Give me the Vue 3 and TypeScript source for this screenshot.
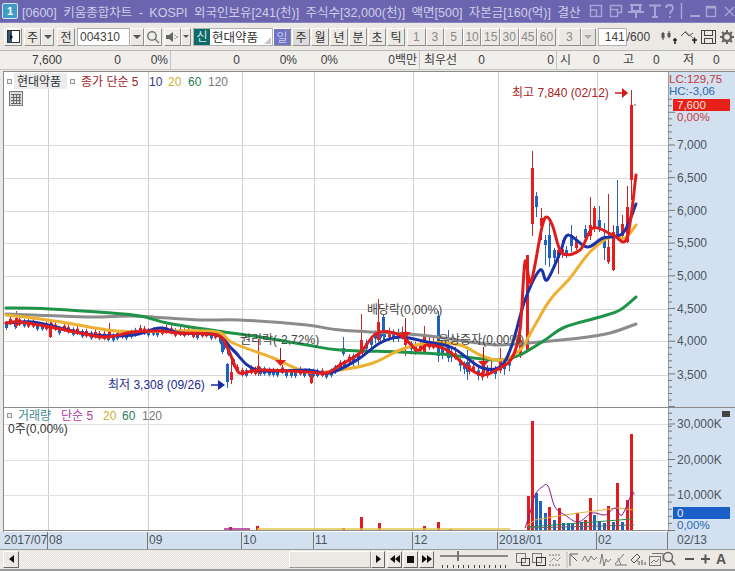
<script setup lang="ts">
type Point = [number, number];
type Candle = { x: number; wt: number; wb: number; bt: number; bb: number; up: boolean };

const toPoints = (line: Point[]) => line.map((p) => p.join(',')).join(' ');

// catmull-rom through the points, the moving averages are curves in the original
const smooth = (line: Point[]) => {
  let d = `M${line[0][0]} ${line[0][1]}`;
  for (let i = 0; i < line.length - 1; i++) {
    const p0 = line[Math.max(i - 1, 0)];
    const p1 = line[i];
    const p2 = line[i + 1];
    const p3 = line[Math.min(i + 2, line.length - 1)];
    const c1x = p1[0] + (p2[0] - p0[0]) / 6;
    const c1y = p1[1] + (p2[1] - p0[1]) / 6;
    const c2x = p2[0] - (p3[0] - p1[0]) / 6;
    const c2y = p2[1] - (p3[1] - p1[1]) / 6;
    d += `C${c1x.toFixed(1)} ${c1y.toFixed(1)} ${c2x.toFixed(1)} ${c2y.toFixed(1)} ${p2[0]} ${p2[1]}`;
  }
  return d;
};

const redLine: Point[] = [[6,323],[20,322],[50,327],[80,333],[107,337],[133,332],[160,331],[180,333],[217,335],[227,347],[237,370],[243,373],[260,370],[307,372],[327,373],[340,365],[360,353],[377,333],[400,335],[417,350],[427,345],[447,350],[467,367],[483,375],[500,368],[512,358],[520,330],[525,262],[531,282],[542,227],[547,217],[553,227],[562,253],[580,250],[593,228],[613,235],[627,238],[636,175]];
const blueLine: Point[] = [[6,323],[33,322],[60,328],[93,335],[133,335],[160,328],[180,333],[217,335],[233,350],[257,370],[307,370],[330,373],[357,360],[380,343],[400,337],[427,342],[453,348],[480,367],[500,367],[512,345],[525,300],[540,270],[547,280],[560,253],[568,235],[587,247],[603,238],[623,233],[636,204]];
const yellowLine: Point[] = [[6,315],[33,318],[67,323],[107,330],[133,332],[167,331],[217,332],[233,343],[273,358],[307,372],[340,370],[373,363],[400,350],[427,343],[460,345],[480,355],[500,360],[520,350],[535,325],[550,300],[570,278],[590,252],[610,237],[625,238],[636,225]];
const greenLine: Point[] = [[6,308],[50,309],[133,315],[167,323],[217,331],[260,337],[307,345],[340,350],[400,352],[440,354],[473,358],[500,360],[520,355],[545,340],[565,327],[600,317],[620,310],[636,297]];
const grayLine: Point[] = [[6,314],[33,315],[87,317],[130,316],[153,317],[200,320],[240,320],[307,325],[340,330],[420,335],[470,342],[500,345],[540,342],[580,338],[610,333],[636,324]];

const maLines = [
  { d: smooth(grayLine), color: '#8c8c8c' },
  { d: smooth(greenLine), color: '#1e9448' },
  { d: smooth(yellowLine), color: '#eeb030' },
  { d: smooth(blueLine), color: '#1a32a8' },
  { d: smooth(redLine), color: '#e01c1c' },
];

const lineY = (x: number) => {
  for (let i = 1; i < redLine.length; i++) {
    const [x0, y0] = redLine[i - 1];
    const [x1, y1] = redLine[i];
    if (x <= x1) return y0 + ((y1 - y0) * (x - x0)) / (x1 - x0);
  }
  return 300;
};

// small candles hugging the 5 day line, left part of the chart
const candles: Candle[] = [];
for (let x = 6, i = 0; x < 512; x += 4.45, i++) {
  const y = lineY(x);
  const a = Math.sin(i * 12.9898) * 43758.5453;
  const r = a - Math.floor(a);
  const span = x > 350 ? 9 : 5;
  candles.push({
    x: Math.round(x),
    wt: y - 2 - r * span,
    wb: y + 2 + (1 - r) * span,
    bt: y - 1 - r * 3,
    bb: y + 1 + (1 - r) * 4,
    up: r > 0.45,
  });
}
const tall: Candle[] = [
  { x: 16, wt: 311, wb: 328, bt: 318, bb: 326, up: true },
  { x: 50, wt: 322, wb: 338, bt: 325, bb: 337, up: true },
  { x: 109, wt: 323, wb: 340, bt: 331, bb: 338, up: true },
  { x: 222, wt: 340, wb: 354, bt: 342, bb: 352, up: false },
  { x: 227, wt: 363, wb: 388, bt: 364, bb: 382, up: false },
  { x: 231, wt: 360, wb: 384, bt: 372, bb: 380, up: true },
  { x: 258, wt: 339, wb: 376, bt: 366, bb: 373, up: true },
  { x: 311, wt: 370, wb: 384, bt: 375, bb: 383, up: true },
  { x: 343, wt: 337, wb: 356, bt: 348, bb: 354, up: false },
  { x: 361, wt: 314, wb: 351, bt: 340, bb: 350, up: true },
  { x: 378, wt: 299, wb: 342, bt: 322, bb: 340, up: true },
  { x: 383, wt: 315, wb: 340, bt: 317, bb: 336, up: false },
  { x: 405, wt: 318, wb: 356, bt: 335, bb: 345, up: true },
  { x: 424, wt: 326, wb: 354, bt: 336, bb: 352, up: true },
  { x: 438, wt: 311, wb: 362, bt: 316, bb: 356, up: false },
  { x: 448, wt: 330, wb: 362, bt: 345, bb: 358, up: false },
  { x: 467, wt: 350, wb: 380, bt: 362, bb: 372, up: false },
  { x: 483, wt: 347, wb: 375, bt: 362, bb: 373, up: true },
  { x: 500, wt: 348, wb: 372, bt: 358, bb: 366, up: true },
  { x: 520, wt: 330, wb: 358, bt: 340, bb: 356, up: true },
  { x: 527, wt: 255, wb: 350, bt: 255, bb: 350, up: true },
  { x: 532, wt: 151, wb: 236, bt: 168, bb: 224, up: true },
  { x: 536, wt: 192, wb: 217, bt: 196, bb: 207, up: false },
  { x: 541, wt: 208, wb: 240, bt: 218, bb: 226, up: true },
  { x: 545, wt: 235, wb: 265, bt: 240, bb: 245, up: false },
  { x: 549, wt: 223, wb: 267, bt: 235, bb: 258, up: false },
  { x: 554, wt: 248, wb: 265, bt: 250, bb: 258, up: false },
  { x: 558, wt: 245, wb: 274, bt: 250, bb: 258, up: true },
  { x: 562, wt: 240, wb: 258, bt: 249, bb: 254, up: true },
  { x: 566, wt: 246, wb: 258, bt: 250, bb: 254, up: false },
  { x: 571, wt: 225, wb: 252, bt: 235, bb: 246, up: false },
  { x: 576, wt: 236, wb: 250, bt: 240, bb: 248, up: true },
  { x: 585, wt: 225, wb: 240, bt: 229, bb: 238, up: false },
  { x: 590, wt: 197, wb: 240, bt: 225, bb: 236, up: true },
  { x: 594, wt: 206, wb: 232, bt: 208, bb: 228, up: true },
  { x: 599, wt: 206, wb: 232, bt: 220, bb: 228, up: false },
  { x: 604, wt: 223, wb: 260, bt: 237, bb: 248, up: false },
  { x: 608, wt: 194, wb: 264, bt: 247, bb: 262, up: true },
  { x: 613, wt: 225, wb: 271, bt: 232, bb: 270, up: true },
  { x: 617, wt: 180, wb: 240, bt: 226, bb: 238, up: false },
  { x: 622, wt: 215, wb: 240, bt: 224, bb: 236, up: true },
  { x: 627, wt: 186, wb: 243, bt: 207, bb: 242, up: true },
  { x: 631, wt: 90, wb: 200, bt: 105, bb: 180, up: true },
];
const allCandles = [...candles, ...tall];

const gridX = [48, 148, 242, 314, 413, 498, 597];
const priceGridY = [145, 178, 211, 243, 276, 309, 341, 375];
const volGridY = [424, 460, 495];

const priceLabels = [
  { t: '7,000', y: 149 }, { t: '6,500', y: 182 }, { t: '6,000', y: 215 }, { t: '5,500', y: 247 },
  { t: '5,000', y: 280 }, { t: '4,500', y: 313 }, { t: '4,000', y: 345 }, { t: '3,500', y: 379 },
];
const volLabels = [
  { t: '30,000K', y: 428 }, { t: '20,000K', y: 464 }, { t: '10,000K', y: 499 },
];

const priceTicks: { y: number; major: boolean }[] = [];
for (let i = -7; i < 44; i++) priceTicks.push({ y: 145 + i * 6.54, major: i % 5 === 0 });
const volTicks: { y: number; major: boolean }[] = [];
for (let i = 0; i < 16; i++) volTicks.push({ y: 424 + i * 7.1, major: i % 5 === 0 });

const volBars = [
  [528,496,1],[532,421,1],[536,493,0],[540,501,0],[545,513,0],[549,507,1],[554,520,0],[559,508,1],
  [563,523,0],[568,523,0],[572,524,0],[577,513,1],[581,522,0],[585,520,1],[590,498,1],[594,515,0],
  [599,521,0],[604,523,0],[608,506,1],[613,522,0],[617,483,1],[622,522,0],[627,500,1],[631,434,1],
  [379,523,1],[424,526,1],[438,522,1],[361,517,1],[257,526,1],[230,527,1],[343,528,1],[450,529,1],
];
const vol5: Point[] = [[525,528],[530,513],[535,495],[542,487],[548,486],[555,507],[565,515],[578,522],[592,513],[605,515],[615,508],[622,515],[632,493],[634,495]];
const vol20: Point[] = [[525,527],[535,520],[552,517],[578,513],[618,508],[634,510]];
const vol60: Point[] = [[528,527],[580,523],[632,519]];
const vol120: Point[] = [[528,528],[634,525]];

const minuteBtns = ['1', '3', '5', '10', '15', '30', '45', '60'];
const periodBtns = ['주', '월', '년', '분', '초', '틱'];

// date axis cells, width comes from the grid positions
const dateCells = [
  { t: '2017/07', w: 45 }, { t: '08', w: 100 }, { t: '09', w: 94 }, { t: '10', w: 72 },
  { t: '11', w: 99 }, { t: '12', w: 85 }, { t: '2018/01', w: 99 }, { t: '02', w: 71 },
];
const sliderDots = Array.from({ length: 13 }, (_, i) => i);
</script>

<template>
  <div class="window">
    <div class="titlebar">
      <span class="win-badge">1</span>
      <span class="title-text">[0600] 키움종합차트 - KOSPI 외국인보유[241(천)] 주식수[32,000(천)] 액면[500] 자본금[160(억)] 결산</span>
      <svg class="title-icons" width="146" height="18" viewBox="0 0 146 18" fill="none" stroke="#a9a5d6" stroke-width="1.4">
        <rect x="1.500" y="3.500" width="11" height="11" /><path d="M1.500 8h6v6.500" />
        <rect x="21.500" y="7.500" width="7" height="7" /><path d="M21.500 7V3.500h11v7h-4" />
        <path d="M41 3h12M43 3v6h8V3M39 10h16M47 10v6" stroke-width="2" />
        <path d="M60 3.500h12M66 3.500v11M63 15h6" stroke-width="2" />
        <path d="M77 6c0-4 7-4 7 0 0 3-3 3-3 6M81 14v2" stroke-width="1.800" />
        <path d="M92.500 1v16" />
        <path d="M101 14h10" stroke-width="2" />
        <rect x="117.500" y="4.500" width="9" height="10" /><path d="M117 5.500h10" stroke-width="2" />
        <path d="M136 5l9 9M145 5l-9 9" />
      </svg>
    </div>

    <div class="toolbar">
      <button class="btn icon-btn w18">
        <svg width="13" height="13" viewBox="0 0 13 13"><rect x=".5" y=".5" width="12" height="12" fill="#fff" stroke="#333" /><rect x="1" y="1" width="4" height="11" fill="#357" /><path d="M3 4l3 3-3 3z" fill="#111" /></svg>
      </button>
      <button class="btn w17 ml2">주</button>
      <button class="btn arrow w13"><i class="caret"></i></button>
      <button class="btn w18 ml3">전</button>
      <div class="field code ml2">004310</div>
      <button class="btn arrow w14"><i class="caret"></i></button>
      <button class="btn icon-btn w18">
        <svg width="14" height="14" viewBox="0 0 14 14" fill="none" stroke="#777" stroke-width="1.500"><circle cx="6" cy="6" r="4.200" /><path d="M9 9l4 4" /></svg>
      </button>
      <button class="btn icon-btn w17 ml2">
        <svg width="13" height="12" viewBox="0 0 13 12"><path d="M0 4h3l4-3v10L3 8H0z" fill="#666" /><path d="M9 4v1M9 7v1M11 5v2" stroke="#777" /></svg>
      </button>
      <button class="btn arrow w10"><i class="caret small"></i></button>
      <div class="stock ml2">
        <span class="new-tag">신</span>
        <span class="stock-name">현대약품</span>
        <i class="resize-grip"></i>
      </div>
      <button class="btn period active">일</button>
      <button v-for="p in periodBtns" :key="p" class="btn period" :class="{ soft: p === '주' }">{{ p }}</button>
      <div class="minutes">
        <button v-for="m in minuteBtns" :key="m" class="btn minute">{{ m }}</button>
      </div>
      <button class="btn count">3</button>
      <button class="btn arrow w15 disabled"><i class="caret grey"></i></button>
      <div class="field bars">141</div>
      <span class="bars-max">/600</span>
      <div class="tool-icons">
        <svg width="18" height="18" viewBox="0 0 18 18"><path d="M3 4v8M9 3v7" stroke="#444" stroke-width="1" /><rect x="1.500" y="5" width="3" height="5" fill="#555" /><rect x="7.500" y="5" width="3" height="4" fill="#555" /><path d="M13 12h4M15 10v6" stroke="#222" stroke-width="1.600" /></svg>
        <svg width="18" height="18" viewBox="0 0 18 18" fill="none"><path d="M1 8l4-4 4 4 4-3" stroke="#555" /><path d="M5 3l8 7" stroke="#888" /><path d="M12 12h5M14.500 9.500v6" stroke="#222" stroke-width="1.600" /></svg>
        <svg width="17" height="18" viewBox="0 0 17 18" fill="none" stroke="#444"><rect x="1.500" y="2.500" width="14" height="13" /><rect x="4.500" y="2.500" width="8" height="5" /><rect x="4.500" y="10.500" width="8" height="5" /></svg>
        <svg width="16" height="18" viewBox="0 0 16 18"><circle cx="8" cy="9" r="4" fill="none" stroke="#666" stroke-width="2.500" /><path d="M8 2v3M8 13v3M1 9h3M12 9h3M3 4l2 2M11 12l2 2M13 4l-2 2M5 12l-2 2" stroke="#666" stroke-width="2" /></svg>
      </div>
    </div>

    <div class="inforow">
      <span class="c r" style="width: 62px">7,600</span>
      <span class="c r" style="width: 59px">0</span>
      <span class="c r sep" style="width: 50px">0%</span>
      <span class="c r" style="width: 69px">0</span>
      <span class="c r" style="width: 57px">0%</span>
      <span class="c r" style="width: 41px">0%</span>
      <span class="c r sep" style="width: 82px">0백만</span>
      <span class="c" style="width: 37px; padding-left: 4px">최우선</span>
      <span class="c r" style="width: 28px">0</span>
      <span class="c r sep" style="width: 72px">0</span>
      <span class="c" style="width: 36px; padding-left: 3px">시</span>
      <span class="c" style="width: 30px">0</span>
      <span class="c" style="width: 30px">고</span>
      <span class="c" style="width: 30px">0</span>
      <span class="c" style="width: 30px">저</span>
      <span class="c">0</span>
    </div>

    <svg class="panes" width="735" height="462" viewBox="0 70 735 462">
      <rect x="3" y="72" width="665" height="460" fill="#fff" />
      <rect x="668" y="72" width="67" height="460" fill="#d3e0ef" />

      <line v-for="x in gridX" :key="'gx' + x" :x1="x + 0.5" :x2="x + 0.5" y1="72" y2="531" stroke="#cfcfcf" />
      <line v-for="y in priceGridY" :key="'gy' + y" x1="3" x2="668" :y1="y + 0.5" :y2="y + 0.5" stroke="#d9d9d9" />
      <line v-for="y in volGridY" :key="'vy' + y" x1="3" x2="668" :y1="y + 0.5" :y2="y + 0.5" stroke="#e0e0e0" />

      <path d="M3.500 71v461M3 71.500h732M3 407.500h732M3 530.500h665" stroke="#8a8a8a" fill="none" />
      <path d="M668.500 71v461" stroke="#9a9a9a" />

      <g v-for="(c, i) in allCandles" :key="i">
        <line :x1="c.x + 0.5" :x2="c.x + 0.5" :y1="c.wt" :y2="c.wb" :stroke="c.up ? '#c22a2a' : '#2a62b8'" />
        <rect :x="c.x - 1" :y="c.bt" width="3" :height="c.bb - c.bt" :fill="c.up ? '#e41e1e' : '#1e62c0'" />
      </g>

      <path v-for="l in maLines" :key="l.color" :d="l.d" fill="none" :stroke="l.color" stroke-width="3" stroke-linejoin="round" stroke-linecap="round" />

      <path d="M280.500 348v12M405.500 318v14M483.500 347v14" stroke="#a01818" />
      <path d="M275 360h11l-5.500 6zM400 332h11l-5.500 6zM478 361h11l-5.500 6z" fill="#e01c1c" />
      <path d="M634 105h2" stroke="#c22a2a" />

      <!-- chart notes -->
      <text x="367" y="314" class="note">배당락(0,00%)</text>
      <text x="240" y="344" class="note">권리락(-2,72%)</text>
      <text x="438" y="344" class="note">유상증자(0,00%)</text>
      <text x="512" y="97" class="note high">최고 7,840 (02/12)</text>
      <path d="M615 93h8" stroke="#d01818" stroke-width="1.500" />
      <path d="M622 88l6 5-6 5z" fill="#d01818" />
      <text x="108" y="389" class="note low">최저 3,308 (09/26)</text>
      <path d="M211 385h8" stroke="#1a2aa0" stroke-width="1.500" />
      <path d="M218 380l7 5-7 5z" fill="#1a2aa0" />

      <!-- legends -->
      <rect x="7.500" y="79.500" width="4" height="4" fill="#eee" stroke="#999" />
      <rect x="14" y="73" width="53" height="16" fill="#ececec" />
      <text x="17" y="86" class="leg" fill="#333">현대약품</text>
      <rect x="70.500" y="79.500" width="4" height="4" fill="#eee" stroke="#999" />
      <text x="81" y="86" class="leg" fill="#a02424">종가 단순 5</text>
      <text x="149" y="86" class="leg" fill="#2a3a80">10</text>
      <text x="168" y="86" class="leg" fill="#c8b030">20</text>
      <text x="188" y="86" class="leg" fill="#2a7a4a">60</text>
      <text x="208" y="86" class="leg" fill="#777">120</text>
      <rect x="9.500" y="91.500" width="13" height="14" fill="#ddd" stroke="#777" />
      <path d="M11 94.500h10M11 97.500h10M11 100.500h10M11 103.500h10M13.500 94v10M16.500 94v10M19.500 94v10" stroke="#666" />

      <rect x="7.500" y="413.500" width="4" height="4" fill="#eee" stroke="#999" />
      <text x="18" y="420" class="leg" fill="#3a8a8a">거래량</text>
      <text x="61" y="420" class="leg" fill="#b03a9a">단순 5</text>
      <text x="103" y="420" class="leg" fill="#c8b030">20</text>
      <text x="122" y="420" class="leg" fill="#2a7a5a">60</text>
      <text x="142" y="420" class="leg" fill="#777">120</text>
      <text x="8" y="433" class="leg" fill="#333">0주(0,00%)</text>

      <!-- volume -->
      <rect v-for="b in volBars" :key="'v' + b[0]" :x="b[0] - 1" :y="b[1]" width="3" :height="530 - b[1]" :fill="b[2] ? '#e01c1c' : '#1e62c0'" />
      <path d="M224 529h26" stroke="#a82a8a" stroke-width="1.500" />
      <path d="M257 529h253" stroke="#e4c84a" stroke-width="1.500" />
      <polyline :points="toPoints(vol120)" fill="none" stroke="#666" />
      <polyline :points="toPoints(vol60)" fill="none" stroke="#2a8a4a" />
      <polyline :points="toPoints(vol20)" fill="none" stroke="#e8b040" />
      <path :d="smooth(vol5)" fill="none" stroke="#8a1a8a" />

      <!-- axis -->
      <line v-for="t in priceTicks" :key="'pt' + t.y" x1="668" :x2="t.major ? 675 : 672" :y1="t.y" :y2="t.y" stroke="#777" />
      <line v-for="t in volTicks" :key="'vt' + t.y" x1="668" :x2="t.major ? 675 : 672" :y1="t.y" :y2="t.y" stroke="#777" />
      <text x="669" y="83" class="ax tight" fill="#c03a3a">LC:129,75</text>
      <text x="669" y="95" class="ax tight" fill="#2a6ab0">HC:-3,06</text>
      <rect x="673" y="99" width="57" height="12" fill="#e8201a" />
      <text x="677" y="109" class="ax tight" fill="#f8e8e0">7,600</text>
      <text x="677" y="121" class="ax tight" fill="#c03a3a">0,00%</text>
      <text v-for="l in priceLabels" :key="l.t" x="677" :y="l.y" class="ax" fill="#4a5560">{{ l.t }}</text>
      <text v-for="l in volLabels" :key="l.t" x="677" :y="l.y" class="ax" fill="#4a5560">{{ l.t }}</text>
      <rect x="673" y="507" width="57" height="12" fill="#1a5ec8" />
      <text x="677" y="517" class="ax tight" fill="#e8f0ff">0</text>
      <text x="677" y="529" class="ax tight" fill="#2a6ab0">0,00%</text>
      <rect x="722" y="411" width="8" height="6" fill="#444" />
    </svg>

    <div class="dates">
      <span v-for="d in dateCells" :key="d.t" class="date-cell" :style="{ width: d.w + 'px' }">{{ d.t }}</span>
      <span class="date-cell last">02/13</span>
    </div>

    <div class="bottom">
      <button class="sbtn w16"><i class="tri left"></i></button>
      <div class="track"></div>
      <div class="thumb"></div>
      <button class="sbtn"><i class="tri right"></i></button>
      <button class="sbtn wide">
        <i class="tri left small"></i><i class="tri left small"></i>
      </button>
      <button class="sbtn wide"><i class="stop"></i></button>
      <button class="sbtn wide">
        <i class="tri right small"></i><i class="tri right small"></i>
      </button>
      <div class="slider">
        <i class="slider-line"></i>
        <i class="slider-knob"></i>
        <div class="slider-dots"><i v-for="d in sliderDots" :key="d"></i></div>
      </div>
      <svg class="tools" width="217" height="18" viewBox="0 0 217 18" fill="none" stroke="#777">
        <rect x="1.500" y="3.500" width="9" height="9" /><rect x="6.500" y="8.500" width="8" height="7" stroke="#444" />
        <rect x="17.500" y="3.500" width="9" height="9" /><rect x="21.500" y="7.500" width="9" height="8" stroke="#333" />
        <path d="M34 5h12M34 15h12M35 12l4-4 3 3 4-4" stroke-dasharray="2 1" />
        <path d="M51 2h1v16" stroke="#bbb" />
        <path d="M55 4h8M55 4v12M55 4l7 7" stroke="#666" />
        <path d="M67 11l3-5 3 6 3-6 3 4 3-3" />
        <path d="M85 14l2-10 2 12 2-7 2 3 3-3" />
        <path d="M100 14l9-10M103 8l3 7M100 15h12" />
        <path d="M116 10l6-6 3 3-6 6zM122 11h1M124 15v-4M127 15v-5M130 15v-3" stroke="#555" />
        <rect x="134.500" y="6.500" width="11" height="9" /><path d="M137 3.500h11v8M136 13l3-3 2 2 3-3" />
        <circle cx="153" cy="7" r="4.500" stroke="#666" stroke-width="1.500" /><path d="M156 10l4 5" stroke="#666" stroke-width="1.500" />
        <path d="M170 9h9M186 9h9M190.500 4.500v9" stroke="#555" stroke-width="2" />
      </svg>
      <span class="font-a">A</span>
    </div>
  </div>
</template>

<style>
html, body {
  margin: 0;
  background: #ece9e4;
}
</style>

<style scoped>
.window {
  width: 735px;
  height: 571px;
  overflow: hidden;
  background: #ece9e4;
  font-family: "Liberation Sans", "Noto Sans CJK KR", sans-serif;
  font-size: 12px;
  color: #3c3c3c;
  box-sizing: border-box;
  border-bottom: 2px solid #9a9a9a;
}

.titlebar {
  height: 23px;
  background: #6a65ae;
  display: flex;
  align-items: center;
  color: #d0cdea;
  font-size: 12.500px;
  border-bottom: 1px solid #8884c0;
  box-sizing: border-box;
}
.win-badge {
  width: 14px;
  height: 14px;
  margin: 0 4px 0 2px;
  flex: none;
  border: 1px solid #d8e8f0;
  border-radius: 2px;
  background: #3f9bc8;
  color: #fff;
  font-size: 11px;
  line-height: 14px;
  text-align: center;
  font-weight: bold;
  box-sizing: content-box;
}
.title-text {
  width: 567px;
  flex: none;
  white-space: nowrap;
  overflow: hidden;
  word-spacing: 3px;
}
.title-icons {
  flex: none;
}

.toolbar {
  height: 27px;
  display: flex;
  align-items: center;
  padding-left: 4px;
  box-sizing: border-box;
}
.btn {
  height: 18px;
  padding: 0;
  margin: 0;
  border: 1px solid #fff;
  border-right-color: #8f8f8f;
  border-bottom-color: #8f8f8f;
  background: #ece9e4;
  font: inherit;
  font-size: 12px;
  color: #333;
  display: flex;
  align-items: center;
  justify-content: center;
  flex: none;
  box-sizing: border-box;
}
.icon-btn { background: #f0eeea; }
.w10 { width: 10px; }
.w13 { width: 13px; }
.w14 { width: 14px; }
.w15 { width: 15px; }
.w17 { width: 17px; }
.w18 { width: 18px; }
.ml2 { margin-left: 2px; }
.ml3 { margin-left: 3px; }
.caret {
  width: 0;
  height: 0;
  border: 4px solid transparent;
  border-top: 4px solid #555;
  border-bottom: 0;
}
.caret.small {
  border-width: 3px;
  border-bottom: 0;
}
.caret.grey { border-top-color: #aaa; }
.field {
  height: 18px;
  background: #fff;
  border: 1px solid #b0b0b0;
  box-sizing: border-box;
  line-height: 16px;
  flex: none;
  color: #444;
}
.code {
  width: 53px;
  padding-left: 2px;
  font-size: 12px;
}
.stock {
  width: 80px;
  height: 18px;
  background: #fff;
  border: 1px solid #b0b0b0;
  box-sizing: border-box;
  display: flex;
  align-items: center;
  flex: none;
  position: relative;
}
.new-tag {
  width: 16px;
  height: 16px;
  background: #0c6a6a;
  color: #d8f0e8;
  line-height: 16px;
  text-align: center;
  font-size: 12px;
}
.stock-name {
  padding-left: 2px;
  font-size: 12.500px;
  color: #333;
}
.resize-grip {
  position: absolute;
  right: 1px;
  bottom: 1px;
  border-left: 7px solid transparent;
  border-bottom: 7px solid #c8c8c8;
}
.period {
  width: 18px;
  margin-right: 1px;
}
.period.active {
  background: #6f73c4;
  color: #c8cae8;
}
.period.soft {
  background: #dcdcdc;
}
.minutes {
  display: flex;
  margin-left: 1px;
}
.minute {
  width: 18.600px;
  color: #8a8a8a;
  font-size: 12px;
}
.count {
  width: 23px;
  margin-left: 2px;
  color: #8a8a8a;
}
.disabled {
  background: #e4e2de;
}
.bars {
  width: 29px;
  margin-left: 2px;
  text-align: right;
  padding-right: 1px;
  font-size: 12px;
}
.bars-max {
  width: 31px;
  flex: none;
  font-size: 12px;
}
.tool-icons {
  display: flex;
  align-items: center;
  gap: 2px;
  margin-left: 2px;
}

.inforow {
  height: 20px;
  display: flex;
  align-items: center;
  background: #f1efeb;
  border-top: 1px solid #b8b8b8;
  border-bottom: 1px solid #c4c4c4;
  box-sizing: border-box;
  white-space: nowrap;
}
.c {
  flex: none;
  box-sizing: border-box;
  line-height: 18px;
}
.r { text-align: right; }
.sep {
  border-right: 1px solid #c4c4c4;
  padding-right: 2px;
}

.panes {
  display: block;
}
.note {
  font-size: 12px;
  fill: #444;
}
.note.high { fill: #a82424; }
.note.low { fill: #1c2a90; }
.leg { font-size: 12px; }
.ax { font-size: 12px; }
.ax.tight { font-size: 11.500px; }

.dates {
  height: 18px;
  display: flex;
  padding-left: 3px;
  background: #d3e0ef;
  border-bottom: 1px solid #9a9a9a;
  box-sizing: border-box;
  color: #4a5560;
}
.date-cell {
  flex: none;
  box-sizing: border-box;
  padding-left: 1px;
  line-height: 17px;
  border-right: 1px solid #777;
  white-space: nowrap;
}
.date-cell.last {
  padding-left: 9px;
  border-right: 0;
}

.bottom {
  height: 18px;
  display: flex;
  align-items: center;
  padding-left: 3px;
}
.sbtn {
  width: 14px;
  height: 17px;
  padding: 0;
  border: 1px solid #fff;
  border-right-color: #666;
  border-bottom-color: #666;
  background: #ece9e4;
  box-sizing: border-box;
  display: flex;
  align-items: center;
  justify-content: center;
  flex: none;
  margin-right: 2px;
}
.sbtn.w16 {
  width: 16px;
  margin-right: 0;
}
.sbtn.wide { width: 15px; margin-right: 1px; }
.tri {
  width: 0;
  height: 0;
  border: 4px solid transparent;
}
.tri.left {
  border-left: 0;
  border-right: 5px solid #111;
}
.tri.right {
  border-right: 0;
  border-left: 5px solid #111;
}
.stop {
  width: 7px;
  height: 7px;
  background: #111;
}
.track {
  width: 270px;
  height: 17px;
  flex: none;
  background: repeating-conic-gradient(#e4e2dc 0 25%, #f6f5f2 0 50%) 0 0 / 2px 2px;
}
.thumb {
  width: 82px;
  height: 17px;
  flex: none;
  background: #ece9e4;
  border: 1px solid #fff;
  border-right-color: #999;
  border-bottom-color: #999;
  box-sizing: border-box;
}
.slider {
  width: 68px;
  height: 17px;
  margin-left: 5px;
  flex: none;
  position: relative;
}
.slider-line {
  position: absolute;
  left: 0;
  right: 0;
  top: 4px;
  border-top: 2px solid #8a8a8a;
}
.slider-knob {
  position: absolute;
  left: 17px;
  top: 0;
  width: 2px;
  height: 10px;
  background: #777;
}
.slider-dots {
  position: absolute;
  left: 2px;
  right: 2px;
  bottom: 0;
  display: flex;
  justify-content: space-between;
}
.slider-dots i {
  width: 1px;
  height: 3px;
  background: #444;
}
.tools {
  flex: none;
  margin-left: 7px;
}
.font-a {
  flex: none;
  margin-left: -16px;
  font-size: 14px;
  font-weight: bold;
  color: #555;
}
</style>
